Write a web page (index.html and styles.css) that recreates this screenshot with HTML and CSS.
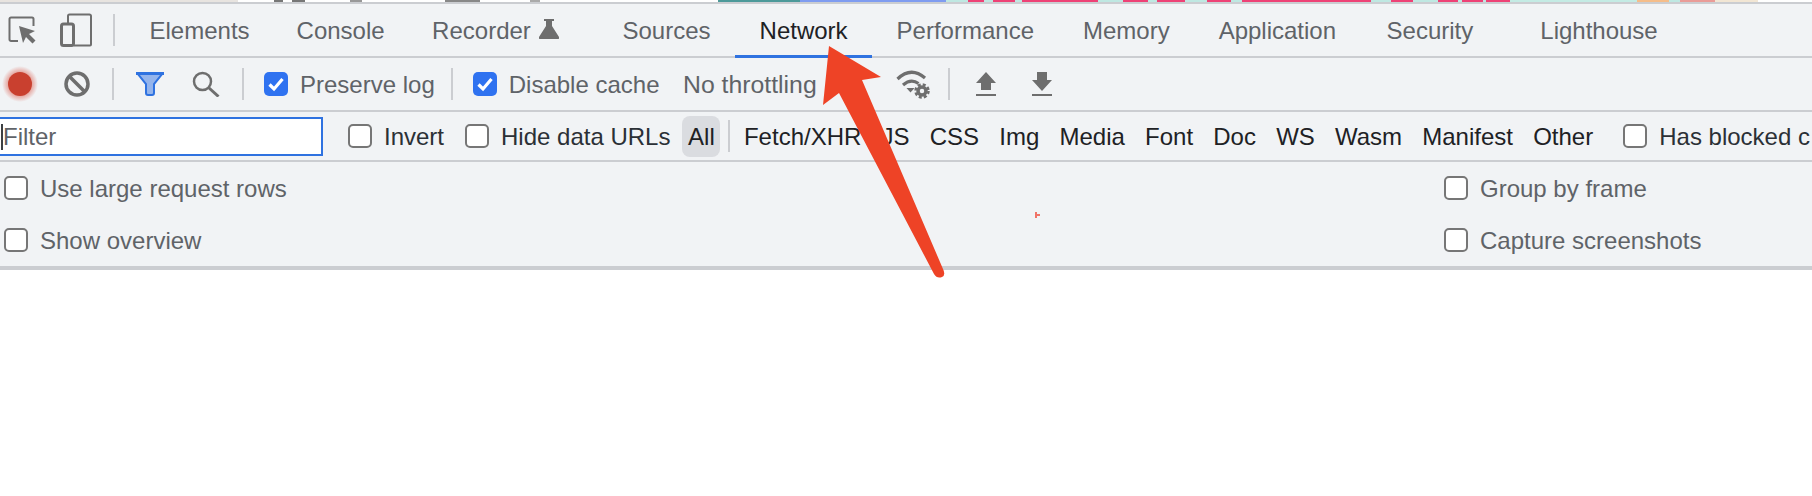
FILE: index.html
```html
<!DOCTYPE html>
<html lang="en">
<head>
    <meta charset="UTF-8">
    <title>Network</title>
    <link rel="stylesheet" href="styles.css">
</head>
<body>
    <div class="page-strip"></div>
    <div class="devtools">
        <!-- tab bar -->
        <div class="tabbar">
            <svg class="icon-inspect" width="28" height="28" viewBox="0 0 28 28">
                <path d="M10 25H3a1.500 1.500 0 0 1-1.500-1.500V3A1.500 1.500 0 0 1 3 1.500h21A1.500 1.500 0 0 1 25.500 3v7" fill="none" stroke="#6e6e6e" stroke-width="2"/>
                <path d="M11 10l16 5-6 3 6.500 6.500-3 3L18 21l-3 6z" fill="#6e6e6e"/>
            </svg>
            <svg class="icon-device" width="32" height="34" viewBox="0 0 32 34">
                <path d="M8 10V3a1.500 1.500 0 0 1 1.500-1.500h20A1.500 1.500 0 0 1 31 3v28.500a1 1 0 0 1-1 1H14" fill="none" stroke="#6e6e6e" stroke-width="2"/>
                <rect x="1.500" y="11" width="12" height="21.500" rx="2" fill="none" stroke="#6e6e6e" stroke-width="3"/>
            </svg>
            <span class="divider"></span>
            <a class="tab first-tab">Elements</a>
            <a class="tab console">Console</a>
            <a class="tab recorder">Recorder
                <svg class="icon-flask" width="20" height="20" viewBox="0 0 20 20"><path d="M5 0h10v2h-2v5l7 11a1.300 1.300 0 0 1-1 2H1a1.300 1.300 0 0 1-1-2L7 7V2H5z" fill="#6e6e6e"/></svg>
            </a>
            <a class="tab">Sources</a>
            <a class="tab active">Network</a>
            <a class="tab">Performance</a>
            <a class="tab">Memory</a>
            <a class="tab">Application</a>
            <a class="tab security">Security</a>
            <a class="tab lighthouse">Lighthouse</a>
        </div>

        <!-- network toolbar -->
        <div class="toolbar">
            <svg class="icon-record" width="40" height="40" viewBox="0 0 40 40">
                <defs>
                    <radialGradient id="record-glow">
                        <stop offset="60%" stop-color="#e49a92"/>
                        <stop offset="100%" stop-color="#f1f3f5"/>
                    </radialGradient>
                </defs>
                <circle cx="20" cy="20" r="18" fill="url(#record-glow)"/>
                <circle cx="20" cy="20" r="12" fill="#c9402f"/>
            </svg>
            <svg class="icon-clear" width="26" height="26" viewBox="0 0 26 26">
                <circle cx="13" cy="13" r="11" fill="none" stroke="#6e6e6e" stroke-width="3.500"/>
                <path d="M5.500 5.500l15 15" stroke="#6e6e6e" stroke-width="3.500"/>
            </svg>
            <span class="divider tool-div-1"></span>
            <svg class="icon-filter" width="28" height="24" viewBox="0 0 28 24">
                <path d="M1 1h26L18 12v9a2 2 0 0 1-2 2h-4a2 2 0 0 1-2-2V12z" fill="#94b4ec" stroke="#2f72e0" stroke-width="2"/>
                <path d="M0 0h28v3H0z" fill="#2f72e0"/>
            </svg>
            <svg class="icon-search" width="28" height="26" viewBox="0 0 28 26">
                <circle cx="10.500" cy="10.500" r="8.500" fill="none" stroke="#6e6e6e" stroke-width="2.500"/>
                <path d="M16.500 16.500l10 9" stroke="#6e6e6e" stroke-width="3"/>
            </svg>
            <span class="divider tool-div-2"></span>
            <span class="check checked preserve">
                <svg width="24" height="24" viewBox="0 0 24 24"><path d="M5.500 12.500l4.500 4.500 8.500-10" fill="none" stroke="#fff" stroke-width="3.200"/></svg>
            </span>
            <span class="label gray">Preserve log</span>
            <span class="divider tool-div-3"></span>
            <span class="check checked">
                <svg width="24" height="24" viewBox="0 0 24 24"><path d="M5.500 12.500l4.500 4.500 8.500-10" fill="none" stroke="#fff" stroke-width="3.200"/></svg>
            </span>
            <span class="label gray">Disable cache</span>
            <span class="label gray throttle">No throttling</span>
            <svg class="icon-wifi" width="34" height="29" viewBox="0 0 34 29">
                <path d="M1.500 9Q15-4 29 8" fill="none" stroke="#6e6e6e" stroke-width="3.200"/>
                <path d="M7 15Q15 8 22.500 13.500" fill="none" stroke="#6e6e6e" stroke-width="3.200"/>
                <path d="M10.500 18h8l-4 4.500z" fill="#6e6e6e"/>
                <circle cx="26" cy="21" r="4" fill="none" stroke="#6e6e6e" stroke-width="3.500"/>
                <circle cx="26" cy="21" r="6.500" fill="none" stroke="#6e6e6e" stroke-width="2.500" stroke-dasharray="3 2.100"/>
            </svg>
            <span class="divider tool-div-4"></span>
            <svg class="icon-upload" width="20" height="24" viewBox="0 0 20 24"><path d="M10 0l10 11h-5v7H5v-7H0zM0 22h20v2H0z" fill="#6e6e6e"/></svg>
            <svg class="icon-download" width="20" height="24" viewBox="0 0 20 24"><path d="M5 0h10v8h5L10 19 0 8h5zM0 22h20v2H0z" fill="#6e6e6e"/></svg>
        </div>

        <!-- filter row -->
        <div class="filterbar">
            <div class="filter-input"><span class="caret"></span>Filter</div>
            <span class="check invert"></span>
            <span class="label dark">Invert</span>
            <span class="check hide-urls"></span>
            <span class="label dark">Hide data URLs</span>
            <span class="type-all">All</span>
            <span class="divider type-div"></span>
            <div class="types">
                <span>Fetch/XHR</span>
                <span>JS</span>
                <span>CSS</span>
                <span>Img</span>
                <span>Media</span>
                <span>Font</span>
                <span>Doc</span>
                <span>WS</span>
                <span>Wasm</span>
                <span>Manifest</span>
                <span>Other</span>
            </div>
            <span class="check blocked"></span>
            <span class="label dark">Has blocked c</span>
        </div>

        <!-- settings -->
        <div class="settings">
            <div class="setting"><span class="check"></span><span class="label gray">Use large request rows</span></div>
            <div class="setting"><span class="check"></span><span class="label gray">Group by frame</span></div>
            <div class="setting"><span class="check"></span><span class="label gray">Show overview</span></div>
            <div class="setting"><span class="check"></span><span class="label gray">Capture screenshots</span></div>
        </div>
    </div>

    <!-- annotation drawn over the screenshot -->
    <svg class="annotation" width="1812" height="496" viewBox="0 0 1812 496">
        <path d="M829 46L881 77 862 80 943 269Q946 275 942 277 937 279 934 274L839 93 823 105z" fill="#ee4326"/>
        <path d="M1035 212h2v2h3v2h-3v2h-2z" fill="#f07468"/>
    </svg>
</body>
</html>
```

FILE: styles.css
```css
html, body {
    margin: 0;
    height: 100%;
    overflow: hidden;
}
body {
    position: relative;
    background-color: #ffffff;
    font-family: "Liberation Sans", Arial, sans-serif;
    font-size: 24px;
}
/* sliver of the page above the devtools */
.page-strip {
    height: 2px;
    background: linear-gradient(to right,
        #e8e4e0 0 238px, #fff 238px 274px, #777 274px 283px, #fff 283px 292px, #777 292px 305px,
        #fff 305px 350px, #999 350px 362px, #fff 362px 445px, #888 445px 480px, #fff 480px 530px,
        #aaa 530px 540px, #fff 540px 718px, #4d9a9a 718px 800px, #7f9cf0 800px 946px,
        #bfe8e2 946px 968px, #ee4276 968px 984px, #bfe8e2 984px 993px, #ee4276 993px 1015px,
        #bfe8e2 1015px 1022px, #ee4276 1022px 1098px, #bfe8e2 1098px 1123px, #ee4276 1123px 1148px,
        #bfe8e2 1148px 1157px, #ee4276 1157px 1185px, #bfe8e2 1185px 1207px, #ee4276 1207px 1231px,
        #bfe8e2 1231px 1242px, #ee4276 1242px 1371px, #bfe8e2 1371px 1391px, #ee4276 1391px 1413px,
        #bfe8e2 1413px 1438px, #ee4276 1438px 1458px, #bfe8e2 1458px 1462px, #ee4276 1462px 1483px,
        #bfe8e2 1483px 1486px, #ee4276 1486px 1510px, #c4ebe4 1510px 1637px, #f5bd8a 1637px 1669px,
        #bfe8e2 1669px 1680px, #ea9c98 1680px 1715px, #f2e6d4 1715px 1758px, #fff 1758px);
}
.devtools {
    background-color: #f1f3f5;
    border-top: 2px solid #cbcdd1;
}
.divider {
    width: 2px;
    height: 32px;
    background-color: #cbcdd1;
    flex: none;
}

/* tabs */
.tabbar {
    display: flex;
    align-items: center;
    height: 52px;
    border-bottom: 2px solid #cbcdd1;
}
.icon-inspect {
    margin-left: 8px;
    flex: none;
}
.icon-device {
    margin-left: 24px;
    flex: none;
}
.tabbar .divider {
    margin-left: 21px;
}
.tab {
    display: flex;
    align-items: center;
    gap: 8px;
    height: 52px;
    box-sizing: border-box;
    padding: 2px 24.5px 0;
    color: #5f6368;
    white-space: nowrap;
}
.first-tab {
    margin-left: 10px;
    padding-right: 22.5px;
}
.console {
    padding-right: 23px;
}
.recorder {
    margin-right: 14.700px;
}
.tab.active {
    color: #202124;
    margin-bottom: -2px;
    height: 54px;
    border-bottom: 3px solid #2f72e0;
}
.security {
    margin-left: 1.500px;
}
.lighthouse {
    margin-left: 18px;
}
.icon-flask {
    margin-bottom: 4px;
}

/* toolbar */
.toolbar {
    display: flex;
    align-items: center;
    height: 52px;
    border-bottom: 2px solid #cbcdd1;
}
.toolbar svg {
    flex: none;
}
.icon-clear { margin-left: 24px; }
.tool-div-1 { margin-left: 22px; }
.icon-filter { margin-left: 22px; }
.icon-search { margin-left: 28px; }
.tool-div-2 { margin-left: 22px; }
.preserve { margin-left: 20px; }
.tool-div-3 { margin-left: 16px; margin-right: 20px; }
.icon-wifi { margin-left: 79px; }
.tool-div-4 { margin-left: 18px; }
.icon-upload { margin-left: 26px; }
.icon-download { margin-left: 36px; }

.check {
    display: block;
    flex: none;
    width: 24px;
    height: 24px;
    box-sizing: border-box;
    background-color: #ffffff;
    border: 2px solid #767676;
    border-radius: 5px;
}
.check.checked {
    background-color: #2f72f0;
    border: none;
}
.check svg {
    display: block;
}
.label {
    margin-left: 12px;
    padding-top: 2px;
    white-space: nowrap;
}
.label.throttle {
    margin-left: 23.500px;
    font-size: 24.800px;
}
.gray {
    color: #5f6368;
}
.dark {
    color: #2b3036;
}

/* filter row */
.filterbar {
    display: flex;
    align-items: center;
    height: 48px;
    border-bottom: 2px solid #cbcdd1;
    overflow: hidden;
}
.filter-input {
    display: flex;
    align-items: center;
    flex: none;
    width: 323px;
    height: 39px;
    box-sizing: border-box;
    padding-top: 2px;
    border: 2px solid #2f72e0;
    border-left: none;
    background-color: #ffffff;
    color: #5f6368;
}
.caret {
    width: 2px;
    height: 26px;
    margin-left: 1px;
    background-color: #3c4043;
}
.invert { margin-left: 25px; }
.hide-urls { margin-left: 21px; }
.type-all {
    flex: none;
    width: 38px;
    height: 41px;
    margin-left: 12px;
    border-radius: 8px;
    background-color: #dadce0;
    color: #202124;
    line-height: 41px;
    text-align: center;
}
.type-div {
    margin-left: 8px;
}
.types {
    display: flex;
    flex: none;
    gap: 20.200px;
    margin-left: 13.500px;
    padding-top: 2px;
    color: #202124;
}
.blocked {
    margin-left: 30px;
}

/* settings */
.settings {
    display: grid;
    grid-template-columns: 1440px 1fr;
    grid-auto-rows: 52px;
    padding-left: 4px;
    border-bottom: 4px solid #cbcdd1;
}
.setting {
    display: flex;
    align-items: center;
}
.annotation {
    position: absolute;
    top: 0;
    left: 0;
    pointer-events: none;
}
```
